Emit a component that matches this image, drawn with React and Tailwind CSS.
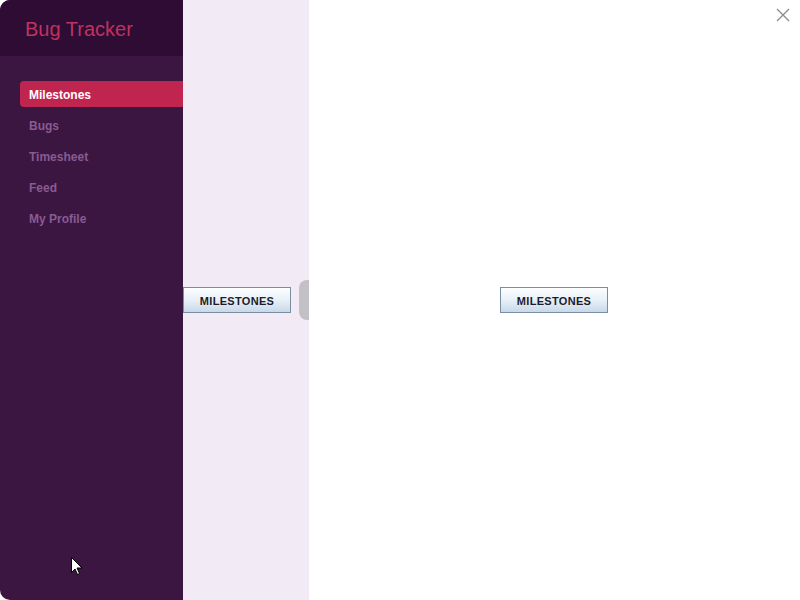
import React from 'react';

const NAV = ['Milestones', 'Bugs', 'Timesheet', 'Feed', 'My Profile'];

const MilestonesButton = () => (
  <button className="w-[108px] h-[26px] pt-[2px] border border-[#7b8da3] bg-gradient-to-b from-[#fdfeff] via-[#e8f0f8] to-[#c9d8e8] text-[11px] font-bold text-[#1c1c2a] tracking-[0.3px]">
    MILESTONES
  </button>
);

const App = () => {
  return (
    <div className="w-[800px] h-[600px] flex bg-white overflow-hidden relative" style={{ fontFamily: '"Liberation Sans", Arial, sans-serif' }}>
      {/* Sidebar */}
      <div className="w-[183px] h-full flex flex-col bg-[#3b1640] rounded-l-[10px] overflow-hidden">
        <div className="h-[56px] bg-[#2e0c33] flex items-center pl-[25px] pt-[2px]">
          <span className="text-[20px] text-[#c0325f]">Bug Tracker</span>
        </div>
        <nav className="flex flex-col pt-[25px] pl-[20px] gap-[5px]">
          {NAV.map((item, i) => (
            <div
              key={item}
              className={
                i === 0
                  ? 'h-[26px] flex items-center pl-[9px] pt-[2px] rounded-l-[4px] bg-[#c0254f] text-white text-[12px] font-bold'
                  : 'h-[26px] flex items-center pl-[9px] pt-[2px] text-[#8a5a93] text-[12px] font-bold'
              }
            >
              {item}
            </div>
          ))}
        </nav>
      </div>

      {/* Middle panel */}
      <div className="w-[126px] h-full bg-[#f2eaf5] flex items-center justify-between">
        <MilestonesButton />
        <div className="w-[10px] h-[40px] bg-[#c3c1c5] rounded-l-[8px]" />
      </div>

      {/* Main content */}
      <div className="flex-1 h-full flex items-center justify-center relative pr-[1px]">
        <MilestonesButton />
        <button className="absolute top-[8px] right-[10px] text-[#8a8a8a]">
          <svg width="14" height="14" viewBox="0 0 14 14" fill="none" stroke="currentColor" strokeWidth="1.3">
            <path d="M1 1 L13 13 M13 1 L1 13" />
          </svg>
        </button>
      </div>

      {/* Mouse pointer */}
      <svg className="absolute left-[71px] top-[557px]" width="12" height="19" viewBox="0 0 12 19">
        <path d="M0.5 0.5 L0.5 15.5 L4 12 L6.5 17.5 L8.5 16.5 L6 11 L11 11 Z" fill="white" stroke="black" strokeWidth="1" />
      </svg>
    </div>
  );
};

export default App;
